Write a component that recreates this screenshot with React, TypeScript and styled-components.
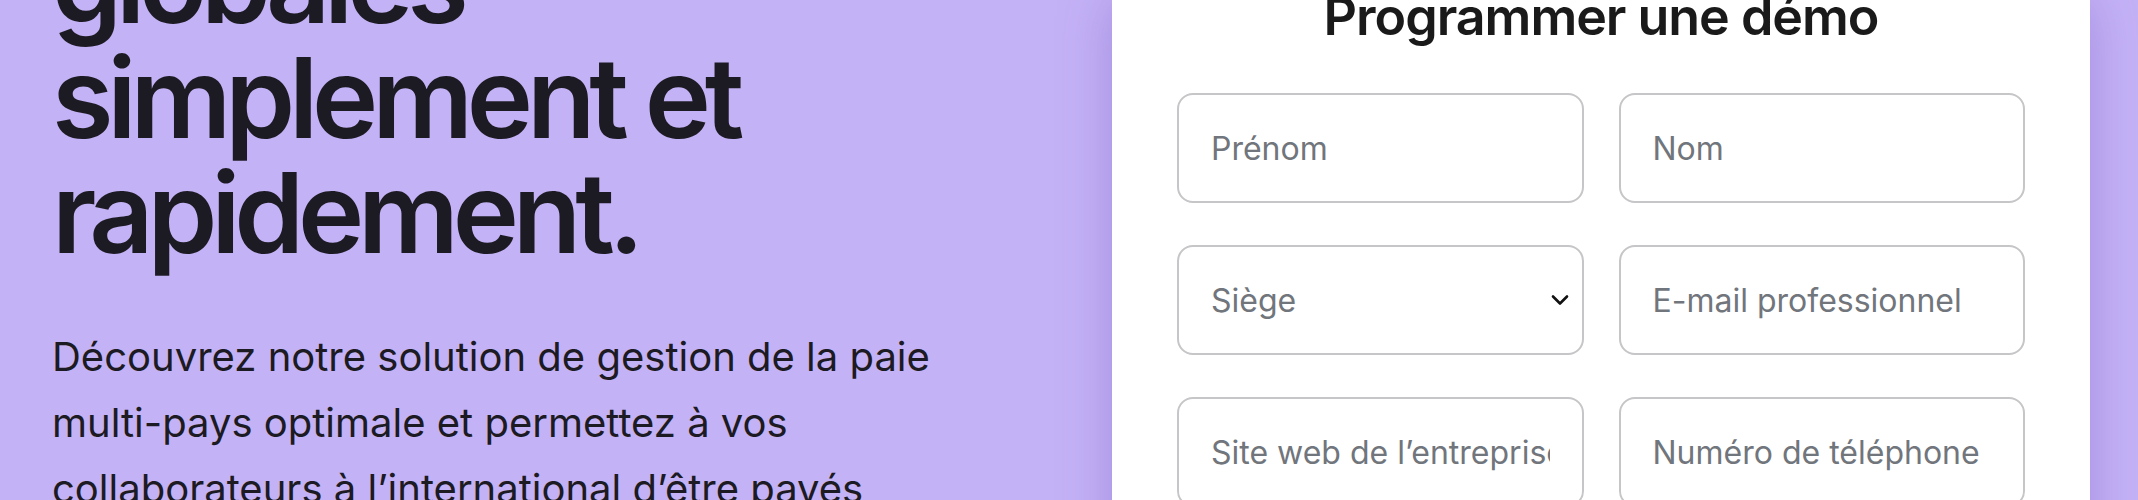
import React from "react";
import styled, { createGlobalStyle } from "styled-components";

const GlobalStyle = createGlobalStyle`
  html, body {
    margin: 0;
    padding: 0;
    background: #c4b2f6;
    overflow: hidden;
  }
  * {
    box-sizing: border-box;
  }
`;

const Page = styled.main`
  display: grid;
  grid-template-columns: 1fr 978px;
  padding-right: 48px;
  height: 500px;
  overflow: hidden;
  font-family: Inter, "Noto Sans", sans-serif;
  color: #1c1a22;
`;

const Intro = styled.section`
  padding-left: 52px;
  max-width: 980px;
`;

const Headline = styled.h1`
  margin: -75px 0 0;
  font-size: 112px;
  line-height: 115px;
  font-weight: 600;
  letter-spacing: -0.055em;
`;

const Lead = styled.p`
  margin: 54px 0 0;
  font-size: 40px;
  line-height: 66px;
  font-weight: 400;
  max-width: 910px;
`;

const NoBreak = styled.span`
  white-space: nowrap;
`;

const Card = styled.section`
  background: #ffffff;
  padding: 0 65px;
  box-shadow: 0 0 48px rgba(100, 70, 180, 0.35);
`;

const CardTitle = styled.h2`
  margin: -14px 0 0;
  font-size: 52px;
  line-height: 62px;
  font-weight: 600;
  letter-spacing: -0.02em;
  text-align: center;
  color: #1a1a1a;
`;

const Fields = styled.div`
  display: grid;
  grid-template-columns: 1fr 1fr;
  column-gap: 35px;
  row-gap: 42px;
  margin-top: 45px;
`;

const fieldCss = `
  width: 100%;
  height: 110px;
  padding: 0 32px;
  border: 2px solid #c6c6c8;
  border-radius: 16px;
  background: #ffffff;
  font-family: Inter, "Noto Sans", sans-serif;
  font-size: 32px;
  color: #1c1a22;
  outline: none;
`;

const TextField = styled.input`
  ${fieldCss}
  &::placeholder {
    color: #71757c;
  }
`;

const SelectWrap = styled.div`
  position: relative;
`;

const SelectField = styled.select`
  ${fieldCss}
  appearance: none;
  color: #71757c;
  padding-right: 60px;
`;

const Chevron = styled.svg`
  position: absolute;
  right: 14px;
  top: 50%;
  transform: translateY(-50%);
  pointer-events: none;
`;

function App() {
  return (
    <>
      <GlobalStyle />
      <Page>
        <Intro>
          <Headline>
            globales
            <br />
            simplement et
            <br />
            rapidement.
          </Headline>
          <Lead>
            Découvrez notre solution de gestion de la paie{" "}
            <NoBreak>multi-pays</NoBreak> optimale et permettez à vos
            collaborateurs à l’international d’être payés correctement et à
            temps.
          </Lead>
        </Intro>
        <Card>
          <CardTitle>Programmer une démo</CardTitle>
          <Fields>
            <TextField placeholder="Prénom" />
            <TextField placeholder="Nom" />
            <SelectWrap>
              <SelectField defaultValue="">
                <option value="" disabled>
                  Siège
                </option>
                <option value="fr">France</option>
                <option value="uk">Royaume-Uni</option>
              </SelectField>
              <Chevron width="20" height="12" viewBox="0 0 20 12">
                <polyline
                  points="3,2.5 10,9.5 17,2.5"
                  fill="none"
                  stroke="#111"
                  strokeWidth="2.6"
                  strokeLinecap="round"
                  strokeLinejoin="round"
                />
              </Chevron>
            </SelectWrap>
            <TextField placeholder="E-mail professionnel" />
            <TextField placeholder="Site web de l’entreprise" />
            <TextField placeholder="Numéro de téléphone" />
          </Fields>
        </Card>
      </Page>
    </>
  );
}

export default App;
